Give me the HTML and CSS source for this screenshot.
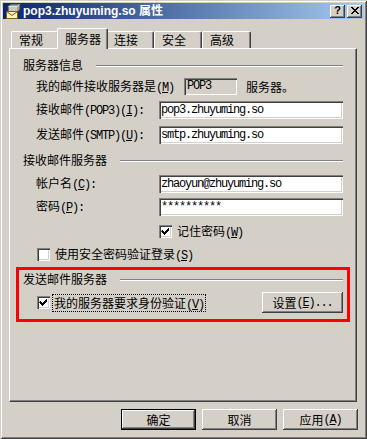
FILE: index.html
```html
<!DOCTYPE html>
<html lang="zh-CN">
<head>
<meta charset="utf-8">
<title>pop3.zhuyuming.so 属性</title>
<link rel="stylesheet" href="styles.css">
</head>
<body>
<div class="window">
  <div class="titlebar">
    <svg class="ticon" width="16" height="16" viewBox="0 0 16 16">
      <path d="M3 3 L6 1 L15 1 L15 7 L12 9 L3 9 Z" fill="#A0A0A0" stroke="#404040" stroke-width="1"/>
      <path d="M3.5 3.5 L12.5 3.5 L14.5 1.5" fill="none" stroke="#E0E0E0" stroke-width="1"/>
      <rect x="4" y="4" width="8" height="4" fill="#C8C8C8"/>
      <rect x="1.5" y="8.5" width="11" height="7" fill="#FFF4B0" stroke="#806000" stroke-width="1"/>
      <path d="M1.5 8.5 L7 12.5 L12.5 8.5" fill="none" stroke="#806000" stroke-width="1"/>
    </svg>
    <span class="ttext">pop3.zhuyuming.so 属性</span>
    <div class="tbtns">
      <div class="cbtn"><span class="qmark">?</span></div>
      <div class="cbtn">
        <svg width="8" height="7" viewBox="0 0 8 7"><path d="M0 0h2v1h-2zM6 0h2v1h-2zM1 1h2v1h-2zM5 1h2v1h-2zM2 2h4v1h-4zM3 3h2v1h-2zM2 4h4v1h-4zM1 5h2v1h-2zM5 5h2v1h-2zM0 6h2v1h-2zM6 6h2v1h-2z" fill="#000"/></svg>
      </div>
    </div>
  </div>

  <div class="tabs">
    <div class="tab t1">常规</div>
    <div class="tab sel">服务器</div>
    <div class="tab t3">连接</div>
    <div class="tab t4">安全</div>
    <div class="tab t5">高级</div>
  </div>

  <div class="panel">
    <div class="grp g1"><span>服务器信息</span><div class="line"></div></div>

    <div class="row rb">
      <span class="lbl lwide">我的邮件接收服务器是<span class="l">(<u>M</u>)</span></span>
      <div class="edit ro">POP3</div>
      <span class="after">服务器。</span>
    </div>

    <div class="row rc">
      <span class="lbl">接收邮件<span class="l">(POP3)(<u>I</u>):</span></span>
      <div class="edit">pop3.zhuyuming.so</div>
    </div>

    <div class="row rd">
      <span class="lbl">发送邮件<span class="l">(SMTP)(<u>U</u>):</span></span>
      <div class="edit">smtp.zhuyuming.so</div>
    </div>

    <div class="grp g2"><span>接收邮件服务器</span><div class="line"></div></div>

    <div class="row re">
      <span class="lbl">帐户名<span class="l">(<u>C</u>):</span></span>
      <div class="edit">zhaoyun@zhuyuming.so</div>
    </div>

    <div class="row rf">
      <span class="lbl">密码<span class="l">(<u>P</u>):</span></span>
      <div class="edit">**********</div>
    </div>

    <div class="row rg">
      <div class="chk">
        <svg width="13" height="13" viewBox="0 0 13 13"><path d="M3 5h1v1h1v1h1v-1h1v-1h1v-1h1v-1h1v3h-1v1h-1v1h-1v1h-1v1h-1v-1h-1v-1h-1v-1h-1z" fill="#000"/></svg>
      </div>
      <span class="ctext">记住密码<span class="l">(<u>W</u>)</span></span>
    </div>

    <div class="row rh">
      <div class="chk"></div>
      <span class="ctext">使用安全密码验证登录<span class="l">(<u>S</u>)</span></span>
    </div>

    <div class="mark">
      <div class="grp g3"><span>发送邮件服务器</span><div class="line"></div></div>
      <div class="row ri">
        <div class="chk">
          <svg width="13" height="13" viewBox="0 0 13 13"><path d="M3 5h1v1h1v1h1v-1h1v-1h1v-1h1v-1h1v3h-1v1h-1v1h-1v1h-1v1h-1v-1h-1v-1h-1v-1h-1z" fill="#000"/></svg>
        </div>
        <span class="ctext focus">我的服务器要求身份验证<span class="l">(<u>V</u>)</span></span>
        <div class="btn setbtn">设置<span class="l">(<u>E</u>)...</span></div>
      </div>
    </div>
  </div>

  <div class="btnrow">
    <div class="btn def">确定</div>
    <div class="btn">取消</div>
    <div class="btn">应用<span class="l">(<u>A</u>)</span></div>
  </div>
</div>
</body>
</html>
```

FILE: styles.css
```css
* { box-sizing: border-box; }
html, body { margin: 0; padding: 0; }
body {
  background: #D4D0C8;
  font-family: "Noto Sans CJK SC", sans-serif;
  font-size: 12px;
  color: #000;
  width: 367px;
  height: 439px;
  overflow: hidden;
}

.window {
  width: 367px;
  height: 439px;
  background: #D4D0C8;
  box-shadow: inset 1px 1px 0 #D4D0C8, inset -1px -1px 0 #404040,
              inset 2px 2px 0 #FFFFFF, inset -2px -2px 0 #808080;
  padding: 3px 3px 0 3px;
  display: flex;
  flex-direction: column;
}

/* title bar */
.titlebar {
  height: 16px;
  display: flex;
  align-items: center;
  background: linear-gradient(to right, #0A246A, #A6CAF0);
  padding-left: 2px;
  flex: none;
}
.ticon { flex: none; display: block; }
.ttext {
  color: #fff;
  font-family: "Liberation Sans", "Noto Sans CJK SC", sans-serif;
  font-weight: bold;
  font-size: 12px;
  line-height: 16px;
  margin-left: 2px;
  white-space: nowrap;
}
.tbtns { margin-left: auto; margin-right: 2px; display: flex; gap: 2px; }
.cbtn {
  width: 15px;
  height: 13px;
  background: #D4D0C8;
  box-shadow: inset -1px -1px 0 #404040, inset 1px 1px 0 #FFFFFF, inset -2px -2px 0 #808080;
  display: flex;
  align-items: center;
  justify-content: center;
  padding-bottom: 1px;
}
.qmark {
  font-family: "Liberation Sans", sans-serif;
  font-weight: bold;
  font-size: 11px;
  line-height: 11px;
}

/* tabs */
.tabs {
  display: flex;
  align-items: flex-end;
  height: 20px;
  margin-top: 9px;
  padding-left: 8px;
  flex: none;
  position: relative;
  z-index: 2;
}
.tab {
  height: 17px;
  width: 48px;
  padding-left: 7px;
  line-height: 16px;
  border-top: 1px solid #fff;
  border-left: 1px solid #fff;
  border-right: 1px solid #404040;
  box-shadow: inset -1px 0 0 #808080;
  border-radius: 2px 2px 0 0;
  background: #D4D0C8;
  white-space: nowrap;
}
.tab.t5 { width: 49px; }
.tab.sel {
  width: 51px;
  height: 21px;
  margin: 0 -2px -1px -2px;
  padding-left: 7px;
  line-height: 19px;
  position: relative;
  z-index: 3;
}

/* panel */
.panel {
  flex: none;
  height: 354px;
  margin: 0 7px 0 6px;
  border-top: 1px solid #fff;
  border-left: 1px solid #fff;
  border-right: 1px solid #404040;
  border-bottom: 1px solid #404040;
  box-shadow: inset -1px -1px 0 #808080;
  padding: 0 13px 0 13px;
  display: flex;
  flex-direction: column;
}

.grp {
  display: flex;
  align-items: center;
  height: 16px;
  line-height: 16px;
  white-space: nowrap;
}
.grp .line {
  flex: 1;
  height: 2px;
  border-top: 1px solid #808080;
  border-bottom: 1px solid #fff;
  margin-left: 13px;
  margin-top: 1px;
}
.g1 { margin-top: 8px; }
.g2 { margin-top: 8px; }

.row {
  display: flex;
  align-items: center;
  white-space: nowrap;
  line-height: 16px;
}
.lbl { width: 136px; padding-left: 13px; flex: none; }
.lbl.lwide { width: 161px; }
.rb { margin-top: 5px; height: 17px; }
.rc { margin-top: 6px; height: 18px; }
.rd { margin-top: 7px; height: 18px; }
.re { margin-top: 7px; height: 18px; }
.rf { margin-top: 5px; height: 18px; }
.rg { margin-top: 9px; height: 13px; padding-left: 136px; }
.rh { margin-top: 10px; height: 13px; padding-left: 14px; }

.l {
  font-family: "Liberation Mono", monospace;
  font-size: 12px;
  letter-spacing: -1.2px;
}
.l u { text-decoration: underline; text-underline-offset: 1px; }

.edit {
  flex: none;
  width: 184px;
  height: 18px;
  background: #fff;
  box-shadow: inset 1px 1px 0 #808080, inset 2px 2px 0 #404040,
              inset -1px -1px 0 #FFFFFF, inset -2px -2px 0 #D4D0C8;
  font-family: "Liberation Mono", monospace;
  font-size: 12px;
  letter-spacing: -1.2px;
  line-height: 18px;
  padding-left: 2px;
  overflow: hidden;
}
.edit.ro {
  width: 53px;
  height: 17px;
  line-height: 17px;
  background: #D4D0C8;
  padding-left: 3px;
}
.after { margin-left: 9px; }

.chk {
  flex: none;
  width: 13px;
  height: 13px;
  background: #fff;
  box-shadow: inset 1px 1px 0 #808080, inset 2px 2px 0 #404040,
              inset -1px -1px 0 #FFFFFF, inset -2px -2px 0 #D4D0C8;
}
.chk svg { display: block; }
.ctext { margin-left: 5px; }

/* red annotation box */
.mark {
  margin: 6px -7px 0 -7px;
  height: 55px;
  border: 3px solid #FF0000;
  padding: 0 4px 0 4px;
  display: flex;
  flex-direction: column;
}
.g3 { margin-top: 1px; }
.ri { margin-top: 5px; height: 21px; padding-left: 14px; }
.ctext.focus {
  margin-left: 2px;
  padding: 0 1px;
  height: 18px;
  line-height: 16px;
  border: 1px dotted #000;
}

.btn {
  flex: none;
  width: 75px;
  height: 21px;
  background: #D4D0C8;
  box-shadow: inset -1px -1px 0 #404040, inset 1px 1px 0 #FFFFFF, inset -2px -2px 0 #808080;
  display: flex;
  align-items: center;
  justify-content: center;
  line-height: 16px;
  white-space: nowrap;
}
.setbtn { width: 81px; margin-left: auto; }
.btn.def {
  border: 1px solid #000;
}

.btnrow {
  display: flex;
  justify-content: flex-end;
  gap: 6px;
  margin-top: 7px;
  margin-right: 6px;
}
```
